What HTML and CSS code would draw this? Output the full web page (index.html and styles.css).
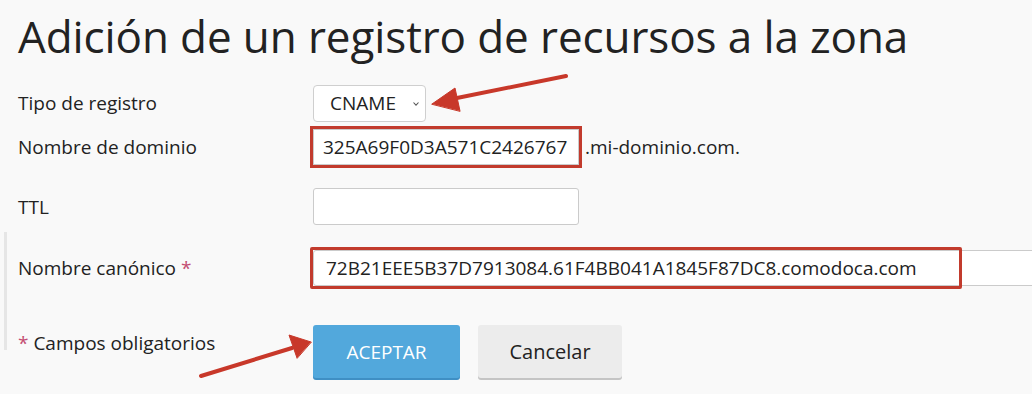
FILE: index.html
```html
<!DOCTYPE html>
<html lang="es">
<head>
    <meta charset="UTF-8">
    <title>Adición de un registro de recursos a la zona</title>
    <link rel="stylesheet" href="styles.css">
</head>
<body>
    <div class="page">
        <h1>Adición de un registro de recursos a la zona</h1>

        <form class="record-form">
            <div class="form-row row-type">
                <label class="field-label">Tipo de registro</label>
                <div class="field">
                    <div class="select-box">
                        <span>CNAME</span>
                        <svg class="chevron" width="8" height="6" viewBox="0 0 8 6"><path d="M1.5 1.5 L4 4.2 L6.5 1.5" fill="none" stroke="#555" stroke-width="1.1"/></svg>
                    </div>
                </div>
            </div>

            <div class="form-row row-domain">
                <label class="field-label">Nombre de dominio</label>
                <div class="field">
                    <input type="text" class="text-input marked" value="325A69F0D3A571C2426767">
                    <span class="suffix">.mi-dominio.com.</span>
                </div>
            </div>

            <div class="form-row row-ttl">
                <label class="field-label">TTL</label>
                <div class="field">
                    <input type="text" class="text-input">
                </div>
            </div>

            <div class="group">
                <div class="form-row row-canonical">
                    <label class="field-label">Nombre canónico <span class="required">*</span></label>
                    <div class="field canonical-field">
                        <input type="text" class="text-input wide" value="72B21EEE5B37D7913084.61F4BB041A1845F87DC8.comodoca.com">
                        <span class="highlight"></span>
                    </div>
                </div>

                <div class="form-row row-actions">
                    <div class="field-label note"><span class="required">*</span> Campos obligatorios</div>
                    <div class="field buttons">
                        <button type="button" class="btn btn-primary">ACEPTAR</button>
                        <button type="button" class="btn btn-default">Cancelar</button>
                    </div>
                </div>
            </div>
        </form>

        <!-- flechas de anotación -->
        <svg class="arrows" width="1032" height="394" viewBox="0 0 1032 394">
            <g fill="#c8382a" stroke="#c8382a" stroke-linecap="round">
                <line x1="566" y1="76" x2="452" y2="99" stroke-width="4"/>
                <polygon points="432,104 455,88 460,111" stroke-width="1"/>
                <line x1="201" y1="376" x2="292" y2="348" stroke-width="4"/>
                <polygon points="311,342 289,335 297,358" stroke-width="1"/>
            </g>
        </svg>
    </div>
</body>
</html>
```

FILE: styles.css
```css
body {
    margin: 0;
    background-color: #f9f9f9;
    font-family: "Open Sans", "Noto Sans", sans-serif;
    color: #222;
}

.page {
    padding: 11px 0 0 18px;
    overflow: hidden;
    height: 383px;
}

h1 {
    margin: 0;
    font-size: 44px;
    line-height: 50px;
    font-weight: 400;
    color: #222;
    letter-spacing: -0.1px;
}

.record-form {
    margin-top: 23px;
}

.form-row {
    display: flex;
    align-items: center;
}

.field-label {
    width: 295px;
    flex-shrink: 0;
    font-size: 19px;
}

.field {
    display: flex;
    align-items: center;
}

.required {
    color: #c34d72;
}

.select-box {
    width: 113px;
    height: 37px;
    box-sizing: border-box;
    border: 1px solid #cfcfcf;
    border-radius: 4px;
    background: #fff;
    display: flex;
    align-items: center;
    justify-content: space-between;
    padding: 0 5px 0 16px;
    font-size: 19px;
}

.chevron {
    margin-top: 1px;
}

.row-type {
    height: 38px;
}

.text-input {
    width: 266px;
    height: 37px;
    box-sizing: border-box;
    border: 1px solid #cbcbcb;
    border-radius: 3px;
    background: #fff;
    font-family: "Open Sans", "Noto Sans", sans-serif;
    font-size: 19px;
    color: #222;
    padding: 0 9px;
}

.marked {
    outline: 3px solid #c23b2d;
    outline-offset: 0;
    border-radius: 0;
}

.row-domain {
    margin-top: 7px;
}

.row-domain .text-input {
    height: 36px;
}

.suffix {
    margin-left: 6px;
    font-size: 19px;
}

.row-ttl {
    margin-top: 23px;
}

.group {
    position: relative;
    margin-left: -14px;
    padding-left: 14px;
    margin-top: 25px;
}

.group::before {
    content: "";
    position: absolute;
    left: 0;
    top: -18px;
    width: 3px;
    height: 118px;
    background: #e6e6e6;
}

.canonical-field {
    position: relative;
}

.text-input.wide {
    width: 740px;
    height: 36px;
    padding-left: 12px;
}

.highlight {
    position: absolute;
    left: -3px;
    top: -3px;
    width: 646px;
    height: 36px;
    border: 3px solid #c23b2d;
    border-radius: 2px;
    pointer-events: none;
}

.row-actions {
    margin-top: 39px;
    align-items: flex-start;
}

.note {
    padding-top: 5px;
}

.buttons {
    gap: 18px;
}

.btn {
    height: 53px;
    border: none;
    border-radius: 3px;
    font-family: "Open Sans", "Noto Sans", sans-serif;
    font-size: 19px;
    cursor: pointer;
}

.btn-primary {
    width: 147px;
    background-color: #52a8dc;
    color: #fff;
    box-shadow: 0 2px 0 #3f8fc4;
}

.btn-default {
    width: 144px;
    background-color: #ececec;
    color: #222;
    font-size: 20px;
    box-shadow: 0 2px 0 #c4c4c4;
}

.arrows {
    position: absolute;
    left: 0;
    top: 0;
    pointer-events: none;
}
```
